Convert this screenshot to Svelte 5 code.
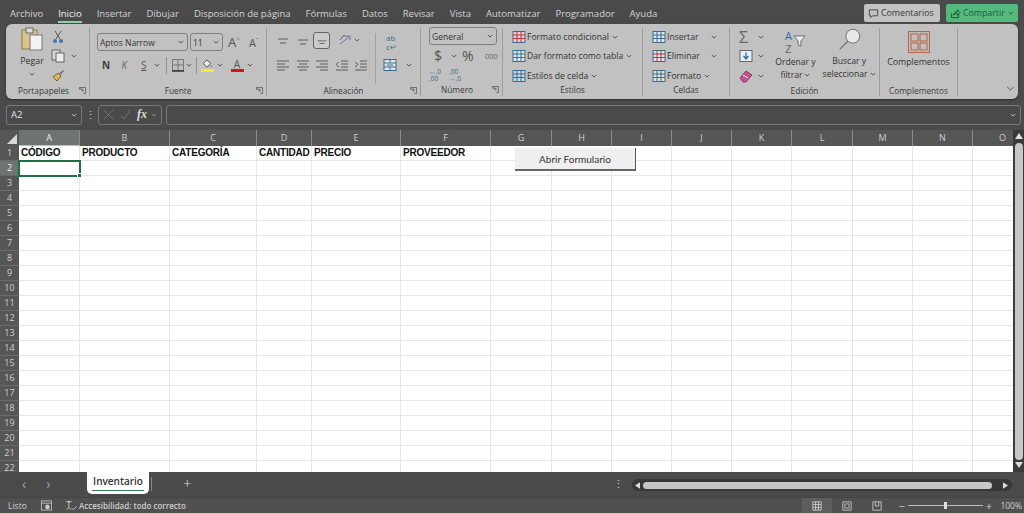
<script>
  const tabs = ['Archivo','Inicio','Insertar','Dibujar','Disposición de página','Fórmulas','Datos','Revisar','Vista','Automatizar','Programador','Ayuda'];
  const cols = [['A',61],['B',90],['C',87],['D',55],['E',89],['F',90],['G',61],['H',60],['I',60],['J',60],['K',60],['L',61],['M',60],['N',60],['O',60]];
  const heads = ['CÓDIGO','PRODUCTO','CATEGORÍA','CANTIDAD','PRECIO','PROVEEDOR'];
  const rows = Array.from({length:22},(_,i)=>i+1);
  const template = '19px ' + cols.map(c=>c[1]+'px').join(' ');
  const L = {
    left:'M1 2h12M1 5h8M1 8h12M1 11h8', center:'M1 2h12M3 5h8M1 8h12M3 11h8', right:'M1 2h12M5 5h8M1 8h12M5 11h8',
    out:'M6 2h7M6 5h7M6 8h7M1 11h12M4 3L1 5.500l3 2.500', ind:'M6 2h7M6 5h7M6 8h7M1 11h12M1 3l3 2.500-3 2.500'
  };
</script>

{#snippet chev()}
  <svg class="chev" viewBox="0 0 8 5"><path d="M1 1l3 3 3-3" fill="none" stroke="#4a4a4a" stroke-width="1.200"/></svg>
{/snippet}
{#snippet ic(d)}
  <svg class="ic" viewBox="0 0 14 14"><path {d} fill="none" stroke="#5c5c5c" stroke-width="1"/></svg>
{/snippet}
{#snippet launcher()}
  <svg class="launch" viewBox="0 0 8 8"><path d="M.5 3V.5H7.500V7.500H5M2 2.500h2.500V5M4.500 5L1 1.500" fill="none" stroke="#555" stroke-width=".9"/></svg>
{/snippet}
{#snippet glabel(t, l)}
  <div class="label"><span></span><span>{t}</span>{#if l}{@render launcher()}{:else}<span></span>{/if}</div>
{/snippet}
{#snippet tableicon(a, b)}
  <svg class="tbl" viewBox="0 0 14 14"><rect x="1" y="1.500" width="12" height="11" fill={b} stroke="#3b6c8f"/><path d="M1 5h12M1 8.500h12M5 1.500v11M9 1.500v11" stroke={a} stroke-width="1"/></svg>
{/snippet}

<div class="page">
  <header class="menubar">
    <nav class="tabs">
      {#each tabs as t}<span class="tab" class:on={t==='Inicio'}>{t}</span>{/each}
    </nav>
    <div class="cta">
      <div class="comment">
        <svg viewBox="0 0 12 12"><path d="M1.500 2h9v6.500H5L3 10.500V8.500H1.500z" fill="none" stroke="#444"/></svg>
        Comentarios
      </div>
      <div class="share">
        <svg viewBox="0 0 12 12"><path d="M1.500 6v4.500h8V7M3.500 8C4 5.500 6 4 8 4V2l3 3-3 3V6C6 6 4.500 6.500 3.500 8z" fill="none" stroke="#14532d"/></svg>
        Compartir {@render chev()}
      </div>
    </div>
  </header>

  <section class="ribbon">
    <div class="group g-clip">
      <div class="body clip">
        <div class="paste">
          <svg viewBox="0 0 22 24" class="clipboard"><rect x="1" y="3" width="15" height="19" fill="#d9c48c" stroke="#8b7a4a"/><rect x="5" y="1" width="7" height="5" fill="#ddd" stroke="#666"/><rect x="9" y="8" width="12" height="15" fill="#f2f2f2" stroke="#777"/></svg>
          <span>Pegar</span>
          {@render chev()}
        </div>
        <div class="clipcol">
          <svg class="ic" viewBox="0 0 14 14"><path d="M4 1l5 8M10 1L5 9" stroke="#555" fill="none"/><circle cx="4" cy="11" r="2" fill="#3f78a8"/><circle cx="10" cy="11" r="2" fill="#3f78a8"/></svg>
          <div class="inline">
            <svg class="ic" viewBox="0 0 14 14"><rect x="1" y="1" width="8" height="10" fill="#d8d8d8" stroke="#666"/><rect x="5" y="4" width="8" height="9" fill="#eee" stroke="#666"/></svg>
            {@render chev()}
          </div>
          <svg class="ic" viewBox="0 0 14 14"><path d="M8 6l4-4 1 1-4 4z" fill="#666"/><path d="M2 9l5-4 3 3-4 5z" fill="#e0b75b" stroke="#7a6330"/></svg>
        </div>
      </div>
      {@render glabel('Portapapeles', true)}
    </div>

    <div class="group g-font">
      <div class="body stack">
        <div class="row">
          <div class="select font">Aptos Narrow {@render chev()}</div>
          <div class="select size">11 {@render chev()}</div>
          <span class="grow big">A<sup>^</sup></span>
          <span class="grow small">A<sup>ˇ</sup></span>
        </div>
        <div class="row r2">
          <b class="fmt n">N</b><i class="fmt k">K</i><u class="fmt s">S</u>{@render chev()}
          <span class="vsep"></span>
          <svg class="ic" viewBox="0 0 14 14"><path d="M1.500 1.500h11v11h-11zM7 1.500v11M1.500 7h11" fill="none" stroke="#777"/><path d="M1 13h12" stroke="#333" stroke-width="1.500"/></svg>
          {@render chev()}
          <span class="vsep v2"></span>
          <span class="swatch"><svg class="ic" viewBox="0 0 14 11"><path d="M7 1l4 4-4 4-4-4z" fill="#eee" stroke="#444"/><path d="M11.500 6.500l1 2h-2z" fill="#3f78a8"/></svg><em class="yellow"></em></span>
          {@render chev()}
          <span class="swatch col"><span>A</span><em class="red"></em></span>
          {@render chev()}
        </div>
      </div>
      {@render glabel('Fuente', true)}
    </div>

    <div class="group g-align">
      <div class="body alignbody">
        <div class="alcol">
          <div class="row a1">
            {@render ic('M2 6h10M4 10h6')}{@render ic('M2 7h10M4 11h6')}
            <span class="selbox">{@render ic('M2 8h10M4 11h6')}</span>
            <svg class="ic orient" viewBox="0 0 14 14"><path d="M2 11L11 4M8 3h4v4" fill="none" stroke="#5a7fa0"/><path d="M2 7l4-5 2 2" fill="none" stroke="#666"/></svg>
            {@render chev()}
          </div>
          <div class="row a2">
            {@render ic(L.left)}{@render ic(L.center)}{@render ic(L.right)}{@render ic(L.out)}{@render ic(L.ind)}
          </div>
        </div>
        <div class="alcol2">
          <span class="wrap">ab<br/>c↵</span>
          <div class="inline">
            <svg class="ic" viewBox="0 0 14 14"><rect x="1" y="1.500" width="12" height="11" fill="#dde7ef" stroke="#3b6c8f"/><path d="M1 5h12M1 9h12M7 1.500v3M7 9v3.500M4 7h6" stroke="#3b6c8f"/></svg>
            {@render chev()}
          </div>
        </div>
      </div>
      {@render glabel('Alineación', true)}
    </div>

    <div class="group g-num">
      <div class="body rows">
        <div class="select general">General {@render chev()}</div>
        <div class="row n2"><span class="dollar">$</span>{@render chev()}<span class="pct">%</span><span class="zeros">000</span></div>
        <div class="row n3"><span class="dec">←,0<br/>,00</span><span class="dec">,00<br/>→,0</span></div>
      </div>
      {@render glabel('Número', true)}
    </div>

    <div class="group g-style">
      <div class="body rows">
        <div class="row item">{@render tableicon('#b33', '#e8d2d2')}<span>Formato condicional</span>{@render chev()}</div>
        <div class="row item">{@render tableicon('#3b6c8f', '#dde7ef')}<span>Dar formato como tabla</span>{@render chev()}</div>
        <div class="row item">{@render tableicon('#3b6c8f', '#c9d9e6')}<span>Estilos de celda</span>{@render chev()}</div>
      </div>
      {@render glabel('Estilos', false)}
    </div>

    <div class="group g-cell">
      <div class="body rows">
        <div class="row item">{@render tableicon('#3b6c8f', '#dde7ef')}<span class="celltext">Insertar</span>{@render chev()}</div>
        <div class="row item">{@render tableicon('#b33', '#dde7ef')}<span class="celltext">Eliminar</span>{@render chev()}</div>
        <div class="row item">{@render tableicon('#3b6c8f', '#e8e0d0')}<span>Formato</span>{@render chev()}</div>
      </div>
      {@render glabel('Celdas', false)}
    </div>

    <div class="group g-edit">
      <div class="body editbody">
        <div class="rows editcol">
          <div class="row"><span class="sigma">Σ</span>{@render chev()}</div>
          <div class="row"><svg class="ic" viewBox="0 0 14 14"><rect x="1" y="1.500" width="12" height="11" fill="#e8eef3" stroke="#666"/><path d="M7 3.500v6M4.500 7L7 10l2.500-3" fill="none" stroke="#2c6ca3" stroke-width="1.300"/></svg>{@render chev()}</div>
          <div class="row"><svg class="ic" viewBox="0 0 14 14"><path d="M1 9l6-7 6 4-6 7H4z" fill="#c2538f" stroke="#8a3a66"/><path d="M4 6l5 3" stroke="#eee"/></svg>{@render chev()}</div>
        </div>
        <div class="big-btn sort">
          <div class="sorticon">
            <span class="az"><span class="blue">A</span><span>Z</span></span>
            <svg viewBox="0 0 14 13"><path d="M1 1h12L8.500 6.500V12l-3-1.500v-4z" fill="#eee" stroke="#666"/></svg>
          </div>
          <span>Ordenar y</span>
          <span>filtrar {@render chev()}</span>
        </div>
        <div class="big-btn find">
          <svg class="mag" viewBox="0 0 26 24"><circle cx="16" cy="9" r="7.500" fill="#e9e9e9" stroke="#666"/><path d="M10.500 14.500L2 23" stroke="#666" stroke-width="1.200"/></svg>
          <span>Buscar y</span>
          <span>seleccionar {@render chev()}</span>
        </div>
      </div>
      {@render glabel('Edición', false)}
    </div>

    <div class="group g-comp">
      <div class="body compbody">
        <svg class="addin" viewBox="0 0 22 22"><g fill="none" stroke="#b8664a" stroke-width="1.100"><rect x=".5" y=".5" width="21" height="21"/><rect x="3" y="3" width="7" height="7"/><rect x="12" y="3" width="7" height="7"/><rect x="3" y="12" width="7" height="7"/><rect x="12" y="12" width="7" height="7"/></g></svg>
        <span>Complementos</span>
      </div>
      {@render glabel('Complementos', false)}
    </div>

    <div class="collapse">
      <svg viewBox="0 0 10 6"><path d="M1 1l4 4 4-4" fill="none" stroke="#555" stroke-width="1.100"/></svg>
    </div>
  </section>

  <section class="fbar">
    <div class="namebox"><span>A2</span><svg class="chev" viewBox="0 0 8 5"><path d="M1 1l3 3 3-3" fill="none" stroke="#ccc" stroke-width="1.200"/></svg></div>
    <span class="dots">⋮</span>
    <div class="fxbox">
      <svg viewBox="0 0 12 12"><path d="M1 1l10 10M11 1L1 11" stroke="#777" fill="none"/></svg>
      <svg viewBox="0 0 12 12"><path d="M1 7l3.500 4L11 1" stroke="#777" fill="none"/></svg>
      <i>fx</i>
      <svg class="chev" viewBox="0 0 8 5"><path d="M1 1l3 3 3-3" fill="none" stroke="#aaa" stroke-width="1"/></svg>
    </div>
    <div class="input"><svg class="chev" viewBox="0 0 8 5"><path d="M1 1l3 3 3-3" fill="none" stroke="#ccc" stroke-width="1.200"/></svg></div>
  </section>

  <section class="sheetwrap">
    <div class="sheet">
      <div class="grid" style="grid-template-columns:{template}">
        <div class="corner"><span></span></div>
        {#each cols as c, i}<div class="ch" class:act={i===0}>{c[0]}</div>{/each}
        {#each rows as r}
          <div class="rh" class:act={r===2}>{r}</div>
          {#each cols as c, i}
            <div class="cell" class:sel={r===2 && i===0}>{#if r===1 && heads[i]}{heads[i]}{/if}</div>
          {/each}
        {/each}
      </div>
      <button class="formbtn">Abrir Formulario</button>
    </div>
    <aside class="vscroll">
      <svg viewBox="0 0 8 6"><path d="M4 0l4 6H0z" fill="#ddd"/></svg>
      <div class="vthumb"></div>
      <svg viewBox="0 0 8 6"><path d="M4 6l4-6H0z" fill="#ddd"/></svg>
    </aside>
  </section>

  <section class="tabbar">
    <div class="nav"><span>‹</span><span>›</span></div>
    <div class="sheettab"><span>Inventario</span></div>
    <span class="tabsep"></span>
    <span class="plus">+</span>
    <span class="spring"></span>
    <span class="dots d2">⋮</span>
    <div class="hscroll">
      <svg viewBox="0 0 6 8"><path d="M0 4l6-4v8z" fill="#ddd"/></svg>
      <div class="hthumb"></div>
      <svg viewBox="0 0 6 8"><path d="M6 4L0 0v8z" fill="#ddd"/></svg>
    </div>
  </section>

  <footer class="status">
    <span class="listo">Listo</span>
    <svg class="macro" viewBox="0 0 12 12"><rect x=".5" y="1" width="11" height="10" fill="none" stroke="#bbb"/><path d="M.5 3.500h11" stroke="#bbb"/><circle cx="7" cy="7.500" r="2.500" fill="#ccc"/></svg>
    <svg class="acc" viewBox="0 0 14 12"><path d="M1 1.500h7M4.500 1.500V8M2 11l2.500-3L7 11M8 9l2 2 3.500-4" fill="none" stroke="#ccc"/><circle cx="4.500" cy="1.500" r="1" fill="#ccc"/></svg>
    <span class="acctext">Accesibilidad: todo correcto</span>
    <span class="spring"></span>
    <div class="view on"><svg viewBox="0 0 12 12"><path d="M1 1h10v10H1zM1 4.300h10M1 7.700h10M4.300 1v10M7.700 1v10" fill="none" stroke="#ddd" stroke-width=".9"/></svg></div>
    <div class="view"><svg viewBox="0 0 12 12"><path d="M1 1h10v10H1zM3.500 3.500h5v5h-5z" fill="none" stroke="#ccc"/></svg></div>
    <div class="view"><svg viewBox="0 0 12 12"><path d="M1 1h10v10H1zM4 1v5h4V1" fill="none" stroke="#ccc"/></svg></div>
    <div class="zoom">
      <span>−</span>
      <div class="track"><div class="knob"></div></div>
      <span>+</span>
    </div>
    <span class="pc">100%</span>
  </footer>
  <div class="edge"></div>
</div>

<style>
  :global(body){margin:0;background:#4a4a4a;}
  .page{width:1024px;height:514px;overflow:hidden;display:flex;flex-direction:column;background:#4a4a4a;font-family:"Open Sans","Noto Sans",sans-serif;color:#2f2f2f;font-size:9px;}
  svg{display:block;flex:none;}
  .chev{width:6px;height:4px;display:inline-block;}
  .ic{width:14px;height:14px;}

  .menubar{height:24px;display:flex;align-items:flex-start;justify-content:space-between;padding:0 6px 0 10px;box-sizing:border-box;}
  .tabs{display:flex;gap:15px;height:24px;align-items:center;font-size:9.500px;color:#d4d4d4;padding-top:2px;box-sizing:border-box;}
  .tab{position:relative;white-space:nowrap;}
  .tab.on{color:#f2f2f2;font-weight:500;}
  .tab.on::after{content:"";position:absolute;left:0;right:0;bottom:-3px;height:1.500px;background:#8fd0ad;}
  .cta{display:flex;gap:6px;padding-top:4px;}
  .comment,.share{height:18px;display:flex;align-items:center;gap:2px;font-size:8.800px;box-sizing:border-box;border-radius:2px;padding:0 3px 0 4px;white-space:nowrap;}
  .comment{width:76px;background:#c2c2c2;color:#3a3a3a;}
  .share{width:72px;background:#54b97c;color:#1d5a36;}
  .comment svg,.share svg{width:11px;height:11px;}
  .share svg.chev{width:6px;height:4px;margin-left:1px;}

  .ribbon{margin:0 6px;height:75px;background:#c1c1c1;border-radius:6px;display:flex;align-items:flex-start;box-shadow:0 1px 2px #2a2a2a;flex:none;}
  .group{height:68px;margin-top:4px;border-right:1px solid #9c9c9c;box-sizing:border-box;display:flex;flex-direction:column;flex:none;}
  .body{height:57px;flex:none;}
  .label{height:11px;display:grid;grid-template-columns:1fr auto 1fr;align-items:center;font-size:8.300px;color:#3a3a3a;padding:0 3px;white-space:nowrap;}
  .launch{width:7px;height:7px;justify-self:end;}
  .rows{display:flex;flex-direction:column;margin-top:-1px;}
  .row{display:flex;align-items:center;}
  .rows>.row{height:19.500px;flex:none;}
  .inline{display:flex;align-items:center;gap:6px;}

  .g-clip{width:84px;}
  .g-clip .label{grid-template-columns:9px auto 1fr;}
  .clip{display:flex;padding-left:11px;}
  .paste{width:30px;display:flex;flex-direction:column;align-items:center;font-size:8.800px;color:#333;}
  .clipboard{width:22px;height:24px;margin-top:-1px;}
  .paste span{margin-top:4px;line-height:13px;}
  .paste .chev{margin-top:4px;}
  .clipcol{display:flex;flex-direction:column;gap:5px;margin-left:4px;margin-top:2px;}

  .g-font{width:177px;}
  .stack{padding:5px 0 0 7px;box-sizing:border-box;}
  .select{height:18px;box-sizing:border-box;border:1px solid #7f7f7f;border-radius:3px;display:flex;align-items:center;justify-content:space-between;padding:0 3px 0 2px;font-size:8.500px;color:#333;flex:none;}
  .font{width:91px;}
  .size{width:33px;margin-left:2px;}
  .grow{margin-left:5px;color:#555;width:15px;line-height:1;}
  .grow sup{font-size:6px;vertical-align:top;color:#3b6c8f;line-height:1;}
  .big{font-size:13px;}
  .small{font-size:11px;margin-left:6px;}
  .r2{height:18px;margin-top:5px;padding-left:5px;gap:0;}
  .fmt{font-size:10px;width:19.500px;color:#3d3d3d;font-family:"Open Sans",sans-serif;flex:none;}
  .k{color:#666;}
  .s{width:12px;color:#555;}
  .r2 .chev{margin-left:1px;}
  .vsep{width:1px;height:17px;background:#8f8f8f;margin:0 4px 0 6px;flex:none;}
  .vsep.v2{margin:0 3px 0 4px;}
  .swatch{width:14px;display:flex;flex-direction:column;align-items:center;flex:none;}
  .swatch .ic{height:10px;}
  .swatch em{display:block;width:13px;height:3px;}
  .swatch + .chev{margin:0 3px 0 3px;}
  .swatch.col{margin-left:4px;font-size:10px;line-height:10px;color:#555;}
  .yellow{background:#f4ee1e;}
  .red{background:#d3141b;}

  .g-align{width:154px;}
  .alignbody{display:flex;padding:5px 0 0 9px;box-sizing:border-box;}
  .alcol{width:99px;border-right:1px solid #a0a0a0;height:51px;flex:none;}
  .a1{gap:5.500px;height:14px;}
  .a1 .selbox{width:17px;height:17px;border:1px solid #666;border-radius:3px;box-sizing:border-box;display:flex;align-items:center;justify-content:center;margin:0 -2px;background:#cbcbcb;}
  .a1 .selbox .ic{width:12px;height:12px;}
  .orient{margin-left:4px;}
  .a1 .chev{margin-left:-3px;}
  .a2{gap:5.500px;margin-top:12px;}
  .alcol2{display:flex;flex-direction:column;align-items:flex-start;padding-left:7px;}
  .wrap{font-size:8px;line-height:9px;color:#3b6c8f;height:19px;padding-left:3px;margin-top:0;}
  .alcol2 .inline{margin-top:6px;gap:9px;}

  .g-num{width:82px;padding-left:8px;}
  .g-num .label{grid-template-columns:9px auto 1fr;}
  .general{width:68px;height:18px;font-size:8.500px;margin-top:0;}
  .rows>.row.n2{height:19px;margin-top:1px;padding-left:5px;}
  .dollar{font-size:14px;color:#555;width:17px;}
  .pct{font-size:14px;color:#555;margin-left:5px;width:23px;}
  .zeros{font-size:7.500px;color:#666;}
  .n3{padding-left:0;gap:6px;}
  .dec{font-size:6.500px;line-height:7px;color:#3b6c8f;width:14px;}

  .g-style{width:140px;padding-left:9px;}
  .g-style .label{margin-left:-9px;}
  .item{gap:0;font-size:8.600px;color:#333;white-space:nowrap;}
  .item span{margin-left:1px;margin-right:3px;}
  .tbl{width:14px;height:14px;}
  .g-cell{width:87px;padding-left:9px;}
  .g-cell .label{margin-left:-9px;}
  .celltext{width:41px;}

  .g-edit{width:150px;}
  .editbody{display:flex;}
  .editcol{width:45px;padding-left:9px;box-sizing:border-box;}
  .editcol .row{gap:5px;}
  .sigma{font-size:16px;color:#666;width:14px;line-height:14px;}
  .big-btn{display:flex;flex-direction:column;align-items:center;line-height:12.500px;font-size:8.600px;color:#333;white-space:nowrap;}
  .big-btn span{display:flex;align-items:center;gap:2px;}
  .sort{width:45px;}
  .sorticon{height:28px;display:flex;align-items:center;gap:1px;}
  .az{display:flex;flex-direction:column;font-size:11px;line-height:11px;color:#666;}
  .az .blue{color:#2c6ca3;}
  .sorticon svg{width:13px;height:12px;margin-top:-3px;}
  .find{width:62px;margin-left:2px;}
  .mag{width:24px;height:24px;margin-bottom:4px;margin-top:-1px;margin-left:2px;}

  .g-comp{width:78px;}
  .compbody{display:flex;flex-direction:column;align-items:center;font-size:8.800px;color:#333;}
  .addin{width:22px;height:22px;margin-top:3px;margin-bottom:3px;}
  .collapse{flex:1;height:75px;display:flex;align-items:flex-end;justify-content:flex-end;padding:0 3px 8px 0;box-sizing:border-box;}
  .collapse svg{width:9px;height:5px;}

  .fbar{height:31px;display:flex;align-items:center;padding:0 3px 0 6px;box-sizing:border-box;flex:none;}
  .namebox,.fxbox,.input{height:20px;box-sizing:border-box;border:1px solid #777;border-radius:3px;display:flex;align-items:center;flex:none;}
  .namebox{width:76px;justify-content:space-between;padding:0 4px;color:#e3e3e3;font-size:9.500px;}
  .fbar .dots{width:16px;text-align:center;color:#ccc;font-size:11px;}
  .fxbox{width:64px;padding:0 2px 0 4px;gap:6px;}
  .fxbox svg:not(.chev){width:11px;height:11px;}
  .fxbox i{font-family:"Liberation Serif",serif;font-size:12px;font-weight:bold;color:#ddd;width:11px;}
  .fxbox .chev{margin-left:-3px;}
  .input{flex:1;margin-left:4px;justify-content:flex-end;padding-right:4px;}

  .sheetwrap{height:342px;display:flex;flex:none;}
  .sheet{width:1013px;height:342px;overflow:hidden;position:relative;background:#fff;flex:none;}
  .grid{display:grid;grid-template-rows:15.500px repeat(22,15px);font-family:"Liberation Sans",sans-serif;}
  .corner{background:#565656;display:flex;align-items:flex-end;justify-content:flex-end;padding:0 2px 2px 0;}
  .corner span{width:0;height:0;border-left:10px solid transparent;border-bottom:10px solid #d8d8d8;}
  .ch,.rh{background:#565656;color:#cfcfcf;font-family:"Open Sans",sans-serif;font-size:9px;display:flex;align-items:center;justify-content:center;box-sizing:border-box;}
  .ch{border-right:1px solid #8a8a8a;}
  .rh{border-bottom:1px solid #6a6a6a;}
  .ch.act,.rh.act{background:#6e7470;color:#f0f0f0;}
  .ch.act{border-bottom:1px solid #a8c8b4;}
  .cell{background:#fff;border-right:1px solid #e6e6e6;border-bottom:1px solid #e6e6e6;box-sizing:border-box;font-size:10px;letter-spacing:-.2px;font-weight:bold;color:#111;line-height:14px;padding-left:2px;white-space:nowrap;}
  .cell.sel{outline:2px solid #1f6f47;outline-offset:-1px;position:relative;z-index:1;}
  .cell.sel::after{content:"";position:absolute;right:-3px;bottom:-3px;width:5px;height:5px;background:#1f6f47;border:1px solid #fff;box-sizing:border-box;}
  .formbtn{position:absolute;left:515px;top:18px;width:121px;height:23px;background:#efefef;border:none;border-right:1px solid #555;border-bottom:2px solid #666;box-sizing:border-box;font-family:"Lato","Open Sans",sans-serif;font-size:10px;color:#333;padding:0;}
  .vscroll{flex:1;display:flex;flex-direction:column;align-items:center;padding:3px 0 2px;box-sizing:border-box;background:#3a3a3a;}
  .vscroll svg{width:8px;height:6px;}
  .vthumb{width:8px;height:317px;background:#c7c7c7;border-radius:4px;margin:4px 0 2px;}

  .tabbar{height:25px;display:flex;align-items:flex-start;flex:none;}
  .nav{width:87px;display:flex;gap:20px;padding-left:22px;box-sizing:border-box;color:#a0a0a0;font-size:14px;line-height:23px;}
  .sheettab{width:62px;height:22px;background:#fff;border-radius:0 0 5px 5px;box-sizing:border-box;display:flex;align-items:flex-start;justify-content:center;font-size:10px;font-weight:600;color:#333;padding-top:3px;flex:none;}
  .sheettab span{display:block;border-bottom:1.500px solid #2e7a52;padding:0 1px 2px;line-height:13px;}
  .tabsep{width:1px;height:14px;background:#888;margin:5px 0 0 2px;}
  .plus{color:#dcdcdc;font-size:15px;line-height:23px;margin-left:31px;font-weight:300;}
  .spring{flex:1;}
  .dots.d2{color:#ddd;font-size:11px;line-height:24px;width:14px;text-align:center;margin-right:7px;}
  .hscroll{width:380px;height:12px;margin:7px 12px 0 0;background:#383838;border-radius:6px;display:flex;align-items:center;padding:0 4px 0 3px;box-sizing:border-box;flex:none;}
  .hscroll svg{width:5px;height:7px;}
  .hthumb{width:349px;height:7px;background:#c7c7c7;border-radius:4px;margin:0 auto 0 3px;}

  .status{height:16px;display:flex;align-items:center;background:#505050;border-top:1px solid #444;box-sizing:border-box;color:#cfcfcf;font-size:8.500px;flex:none;padding-left:8px;}
  .listo{width:33px;}
  .macro{width:11px;height:11px;}
  .acc{width:12px;height:11px;margin-left:13px;}
  .acctext{margin-left:2px;font-weight:600;font-size:8px;}
  .view{width:30px;height:15px;display:flex;align-items:center;justify-content:center;}
  .view.on{background:#5d5d5d;}
  .view svg{width:10px;height:10px;}
  .zoom{display:flex;align-items:center;gap:3px;margin-left:6px;font-size:11px;}
  .track{width:75px;height:1px;background:#bbb;position:relative;}
  .knob{position:absolute;left:36px;top:-3px;width:3px;height:7px;background:#ddd;}
  .pc{width:32px;text-align:right;padding-right:2px;box-sizing:border-box;}
  .edge{height:1px;background:#cfcfb8;flex:none;}
</style>
